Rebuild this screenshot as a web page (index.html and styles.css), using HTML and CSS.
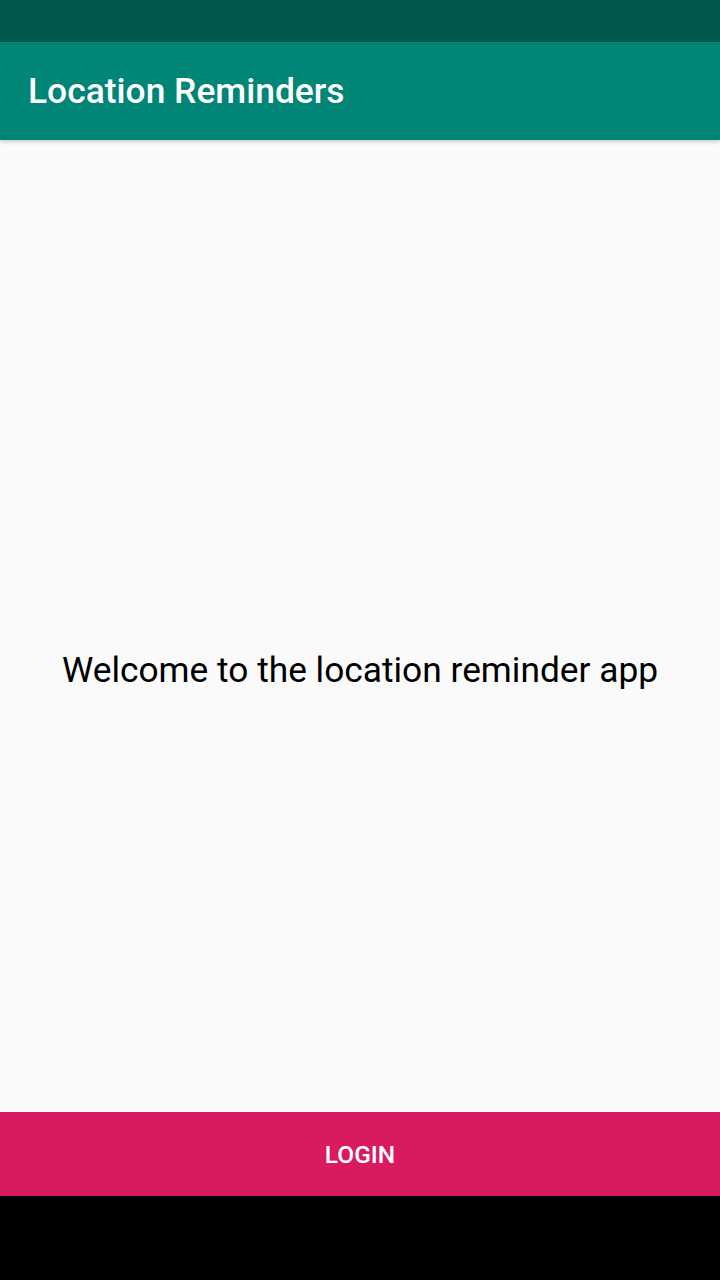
FILE: index.html
```html
<!DOCTYPE html>
<html>
<head>
<meta charset="utf-8">
<link rel="stylesheet" href="styles.css">
</head>
<body>
<div class="screen">
  <div class="status-bar"></div>
  <header class="app-bar"><h1 class="title">Location Reminders</h1></header>
  <main class="content">
    <p class="welcome">Welcome to the location reminder app</p>
  </main>
  <button class="login">LOGIN</button>
  <div class="nav-bar"></div>
</div>
</body>
</html>
```
FILE: styles.css
```css
html, body { margin: 0; padding: 0; }
body { font-family: Roboto, "Noto Sans", sans-serif; background: #000; }
.screen { width: 720px; height: 1280px; display: flex; flex-direction: column; background: #fafafa; }
.status-bar { height: 42px; background: #00574b; flex: none; }
.app-bar { height: 98px; background: #008577; flex: none; display: flex; align-items: center; padding-left: 28px; box-shadow: 0 2px 4px rgba(0,0,0,0.18); position: relative; z-index: 1; }
.title { margin: 0; color: #fff; font-size: 35.4px; font-weight: 500; letter-spacing: 0; }
.content { flex: 1; display: flex; align-items: center; justify-content: center; padding-top: 88px; }
.welcome { margin: 0; font-size: 35.3px; color: #000; }
.login { height: 84px; flex: none; border: none; background: #d81b60; color: #fff; font-family: Roboto, sans-serif; font-size: 24.5px; font-weight: 500; padding: 0; }
.nav-bar { height: 84px; background: #000; flex: none; }
```
